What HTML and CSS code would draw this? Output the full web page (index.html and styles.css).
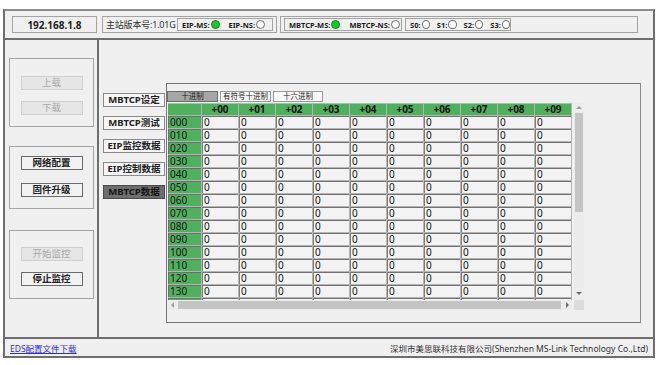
FILE: index.html
```html
<!DOCTYPE html>
<html lang="zh-CN">
<head>
<meta charset="utf-8">
<title>MS-Link</title>
<link rel="stylesheet" href="styles.css">
</head>
<body>
<div class="frame">
  <header class="top">
    <div class="box ip">192.168.1.8</div>
    <div class="box ver">
      <span class="vertext">主站版本号:1.01G</span>
      <div class="ibox eip"><b>EIP-MS:</b><i class="led on"></i><b class="sp">EIP-NS:</b><i class="led"></i></div>
    </div>
    <div class="box st">
      <div class="ibox mb"><b>MBTCP-MS:</b><i class="led on"></i><b class="sp">MBTCP-NS:</b><i class="led"></i></div>
      <div class="ibox ss"><b>S0:</b><i class="led"></i><b class="sp2">S1:</b><i class="led"></i><b class="sp2">S2:</b><i class="led"></i><b class="sp2">S3:</b><i class="led"></i></div>
    </div>
  </header>
  <div class="mid">
    <aside class="left">
      <div class="group g1">
        <button class="btn dis">上载</button>
        <button class="btn dis">下载</button>
      </div>
      <div class="group g2">
        <button class="btn">网络配置</button>
        <button class="btn">固件升级</button>
      </div>
      <div class="group g3">
        <button class="btn dis">开始监控</button>
        <button class="btn">停止监控</button>
      </div>
    </aside>
    <main class="main">
      <nav class="tabs">
        <button class="tab">MBTCP设定</button>
        <button class="tab">MBTCP测试</button>
        <button class="tab">EIP监控数据</button>
        <button class="tab">EIP控制数据</button>
        <button class="tab sel">MBTCP数据</button>
      </nav>
      <section class="panel">
        <div class="subtabs">
          <span class="stab act">十进制</span>
          <span class="stab">有符号十进制</span>
          <span class="stab">十六进制</span>
        </div>
        <div class="gridwrap">
          <div class="grid">
            <span class="h"></span><span class="h">+00</span><span class="h">+01</span><span class="h">+02</span><span class="h">+03</span><span class="h">+04</span><span class="h">+05</span><span class="h">+06</span><span class="h">+07</span><span class="h">+08</span><span class="h">+09</span>
            <span class="r">000</span><span class="c">0</span><span class="c">0</span><span class="c">0</span><span class="c">0</span><span class="c">0</span><span class="c">0</span><span class="c">0</span><span class="c">0</span><span class="c">0</span><span class="c">0</span>
            <span class="r">010</span><span class="c">0</span><span class="c">0</span><span class="c">0</span><span class="c">0</span><span class="c">0</span><span class="c">0</span><span class="c">0</span><span class="c">0</span><span class="c">0</span><span class="c">0</span>
            <span class="r">020</span><span class="c">0</span><span class="c">0</span><span class="c">0</span><span class="c">0</span><span class="c">0</span><span class="c">0</span><span class="c">0</span><span class="c">0</span><span class="c">0</span><span class="c">0</span>
            <span class="r">030</span><span class="c">0</span><span class="c">0</span><span class="c">0</span><span class="c">0</span><span class="c">0</span><span class="c">0</span><span class="c">0</span><span class="c">0</span><span class="c">0</span><span class="c">0</span>
            <span class="r">040</span><span class="c">0</span><span class="c">0</span><span class="c">0</span><span class="c">0</span><span class="c">0</span><span class="c">0</span><span class="c">0</span><span class="c">0</span><span class="c">0</span><span class="c">0</span>
            <span class="r">050</span><span class="c">0</span><span class="c">0</span><span class="c">0</span><span class="c">0</span><span class="c">0</span><span class="c">0</span><span class="c">0</span><span class="c">0</span><span class="c">0</span><span class="c">0</span>
            <span class="r">060</span><span class="c">0</span><span class="c">0</span><span class="c">0</span><span class="c">0</span><span class="c">0</span><span class="c">0</span><span class="c">0</span><span class="c">0</span><span class="c">0</span><span class="c">0</span>
            <span class="r">070</span><span class="c">0</span><span class="c">0</span><span class="c">0</span><span class="c">0</span><span class="c">0</span><span class="c">0</span><span class="c">0</span><span class="c">0</span><span class="c">0</span><span class="c">0</span>
            <span class="r">080</span><span class="c">0</span><span class="c">0</span><span class="c">0</span><span class="c">0</span><span class="c">0</span><span class="c">0</span><span class="c">0</span><span class="c">0</span><span class="c">0</span><span class="c">0</span>
            <span class="r">090</span><span class="c">0</span><span class="c">0</span><span class="c">0</span><span class="c">0</span><span class="c">0</span><span class="c">0</span><span class="c">0</span><span class="c">0</span><span class="c">0</span><span class="c">0</span>
            <span class="r">100</span><span class="c">0</span><span class="c">0</span><span class="c">0</span><span class="c">0</span><span class="c">0</span><span class="c">0</span><span class="c">0</span><span class="c">0</span><span class="c">0</span><span class="c">0</span>
            <span class="r">110</span><span class="c">0</span><span class="c">0</span><span class="c">0</span><span class="c">0</span><span class="c">0</span><span class="c">0</span><span class="c">0</span><span class="c">0</span><span class="c">0</span><span class="c">0</span>
            <span class="r">120</span><span class="c">0</span><span class="c">0</span><span class="c">0</span><span class="c">0</span><span class="c">0</span><span class="c">0</span><span class="c">0</span><span class="c">0</span><span class="c">0</span><span class="c">0</span>
            <span class="r">130</span><span class="c">0</span><span class="c">0</span><span class="c">0</span><span class="c">0</span><span class="c">0</span><span class="c">0</span><span class="c">0</span><span class="c">0</span><span class="c">0</span><span class="c">0</span>
            <span class="r"></span><span class="c"></span><span class="c"></span><span class="c"></span><span class="c"></span><span class="c"></span><span class="c"></span><span class="c"></span><span class="c"></span><span class="c"></span><span class="c"></span>
          </div>
          <div class="vscroll">
            <span class="arr up"></span>
            <span class="vthumb"></span>
            <span class="vfill"></span>
            <span class="arr down"></span>
          </div>
        </div>
        <div class="hscroll">
          <div class="htrack">
            <span class="arr lf"></span>
            <span class="hthumb"></span>
            <span class="arr rt"></span>
          </div>
          <span class="corner"></span>
        </div>
      </section>
    </main>
  </div>
  <footer class="bottom">
    <a class="link" href="#">EDS配置文件下载</a>
    <span class="company">深圳市美思联科技有限公司(Shenzhen MS-Link Technology Co.,Ltd)</span>
  </footer>
</div>
</body>
</html>
```

FILE: styles.css
```css
* { box-sizing: border-box; }
html, body { margin: 0; padding: 0; background: #ffffff; }
body {
  font-family: "Noto Sans", "Noto Sans CJK SC", sans-serif;
  font-size: 10px;
  color: #1a1a1a;
}
button { font-family: inherit; margin: 0; padding: 0; cursor: default; }

.frame {
  margin: 9px 0 0 3px;
  width: 652px;
  height: 349px;
  border: 2px solid #6e6e6e;
  border-top-color: #8c8c8c;
  background: #f0f0f0;
  display: flex;
  flex-direction: column;
}

/* top bar */
.top {
  height: 29px;
  flex: none;
  border-bottom: 2px solid #6e6e6e;
  display: flex;
  align-items: flex-start;
  padding: 5px 0 0 7px;
  gap: 5px;
}
.box {
  height: 17px;
  border: 1px solid #a3a3a3;
  display: flex;
  align-items: center;
}
.ip {
  width: 85px;
  justify-content: center;
  font-weight: bold;
  font-size: 10px;
  color: #222;
}
.ver { width: 175px; padding: 0 3px 0 3px; }
.vertext { font-size: 9px; color: #333; white-space: nowrap; letter-spacing: -0.2px; }
.st { width: 358px; margin-left: -2px; padding-left: 3px; gap: 3px; }
.ibox {
  height: 13px;
  border: 1px solid #a3a3a3;
  display: flex;
  align-items: center;
  padding: 0 0 0 4px;
  font-size: 7.5px;
  color: #1a1a1a;
  white-space: nowrap;
}
.ibox b { font-weight: bold; }
.eip { width: 96px; margin-left: auto; }
.mb { width: 118px; }
.ss { width: 106px; }
.sp { margin-left: 9px; }
.sp2 { margin-left: 7px; }
.led {
  display: inline-block;
  width: 9px;
  height: 9px;
  border-radius: 50%;
  border: 1px solid #707070;
  background: #ffffff;
  margin-left: 1px;
}
.led.on { background: #00d21e; border-color: #2f7a2f; }

/* middle */
.mid { height: 297px; flex: none; display: flex; }
.left {
  width: 94px;
  flex: none;
  border-right: 2px solid #6e6e6e;
  display: flex;
  flex-direction: column;
}
.group {
  margin-left: 4px;
  width: 85px;
  border: 1px solid #a5a5a5;
  display: flex;
  flex-direction: column;
  align-items: center;
}
.g1 { margin-top: 18px; height: 69px; padding-top: 17px; gap: 11px; }
.g2 { margin-top: 19px; height: 63px; padding-top: 9px; gap: 13px; }
.g3 { margin-top: 21px; height: 69px; padding-top: 16px; gap: 11px; }
.btn {
  width: 62px;
  height: 14px;
  border: 1px solid #6a6a6a;
  background: #f2f2f2;
  font-size: 9.5px;
  font-weight: bold;
  line-height: 12px;
  color: #222;
}
.btn.dis {
  border-color: #cfcfcf;
  background: #e6e6e6;
  color: #a9a9a9;
  font-weight: normal;
}

.main { flex: 1; display: flex; padding-left: 4px; }
.tabs {
  width: 62px;
  flex: none;
  margin-top: 53px;
  display: flex;
  flex-direction: column;
  gap: 9px;
}
.tab {
  height: 14px;
  border: 1px solid #8a8a8a;
  background: #f6f6f6;
  font-size: 9.5px;
  font-weight: bold;
  line-height: 12px;
  color: #222;
  white-space: nowrap;
}
.tab.sel { background: #6e6e6e; border-color: #4a4a4a; color: #161616; }

.panel {
  margin: 43px 0 0 1px;
  width: 475px;
  height: 240px;
  border: 1px solid #767676;
  border-right-color: #8a8a8a;
  padding-top: 7px;
}
.subtabs { display: flex; gap: 2px; height: 11px; }
.stab {
  height: 11px;
  border: 1px solid #9a9a9a;
  background: #fafafa;
  font-size: 7.5px;
  line-height: 9px;
  text-align: center;
  color: #222;
}
.stab:nth-child(1) { width: 51px; }
.stab:nth-child(2) { width: 51px; }
.stab:nth-child(3) { width: 50px; }
.stab.act { background: #a6a6a6; border-color: #6a6a6a; }

.gridwrap { display: flex; margin: 1px 0 0 1px; height: 197px; }
.grid {
  width: 404px;
  height: 197px;
  overflow: hidden;
  display: grid;
  grid-template-columns: 33px repeat(10, 36px);
  grid-auto-rows: 12px;
  gap: 1px;
  background: #b4b4b4;
  align-content: start;
}
.grid span { font-size: 10px; line-height: 10px; white-space: nowrap; }
.h {
  background: #4fb15e;
  border-top: 1px solid #8fd09a;
  font-weight: bold;
  text-align: center;
  color: #111;
}
.r {
  background: #4fb15e;
  border-top: 1px solid #6e6e6e;
  border-left: 1px solid #6e6e6e;
  padding-left: 1px;
  color: #111;
}
.c {
  background: #f3f3f3;
  border-top: 1px solid #717171;
  border-left: 1px solid #7c7c7c;
  padding-left: 1px;
  color: #111;
}

.vscroll {
  width: 10px;
  margin-left: 2px;
  height: 197px;
  background: #ececec;
  display: flex;
  flex-direction: column;
  align-items: center;
}
.vthumb { width: 8px; height: 99px; background: #c4c4c4; flex: none; }
.vfill { flex: 1; }
.arr { width: 0; height: 0; flex: none; border: 3px solid transparent; }
.arr.up { border-bottom-color: #9a9a9a; border-top-width: 0; margin: 3px 0 4px; }
.arr.down { border-top-color: #6a6a6a; border-bottom-width: 0; margin: 0 0 5px; }

.hscroll { display: flex; margin-left: 1px; height: 10px; }
.htrack {
  width: 404px;
  background: #ececec;
  display: flex;
  align-items: center;
}
.hthumb { width: 383px; height: 8px; background: #c4c4c4; margin-left: 4px; }
.arr.lf { border-right-color: #a0a0a0; border-left-width: 0; margin-left: 3px; }
.arr.rt { border-left-color: #6a6a6a; border-right-width: 0; margin-left: 5px; }
.corner { width: 10px; margin-left: 2px; background: #dcdcdc; }

/* bottom */
.bottom {
  height: 19px;
  flex: none;
  border-top: 2px solid #6e6e6e;
  display: flex;
  align-items: center;
  justify-content: space-between;
  padding: 0 5px 0 5px;
  font-size: 8.5px;
}
.link { color: #2b2bf0; text-decoration: underline; }
.company { color: #333; }
```
